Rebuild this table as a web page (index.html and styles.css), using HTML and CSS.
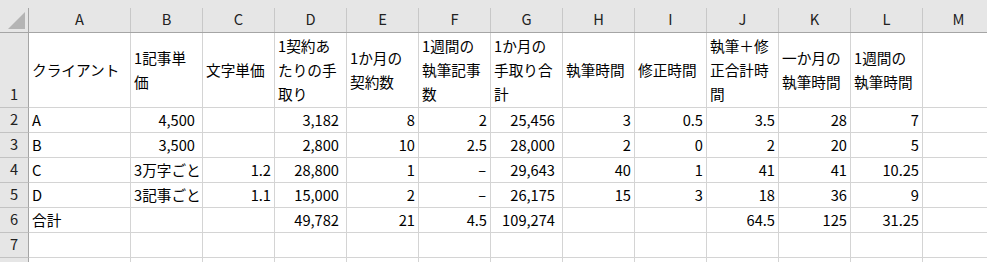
FILE: index.html
```html
<!DOCTYPE html>
<html lang="ja">
<head>
    <meta charset="UTF-8">
    <meta name="viewport" content="width=device-width, initial-scale=1.0">
    <title>執筆単価表</title>
    <link rel="stylesheet" href="styles.css">
</head>
<body>
    <div class="sheet">
        <!-- 列見出し -->
        <div class="corner"><span><i></i></span></div>
        <div class="col-head"><span>A</span></div>
        <div class="col-head"><span>B</span></div>
        <div class="col-head"><span>C</span></div>
        <div class="col-head"><span>D</span></div>
        <div class="col-head"><span>E</span></div>
        <div class="col-head"><span>F</span></div>
        <div class="col-head"><span>G</span></div>
        <div class="col-head"><span>H</span></div>
        <div class="col-head"><span>I</span></div>
        <div class="col-head"><span>J</span></div>
        <div class="col-head"><span>K</span></div>
        <div class="col-head"><span>L</span></div>
        <div class="col-head"><span>M</span></div>

        <!-- 1行目: 項目名 -->
        <div class="row-head">1</div>
        <div class="cell title">クライアント</div>
        <div class="cell title">1記事単価</div>
        <div class="cell title">文字単価</div>
        <div class="cell title">1契約あたりの手取り</div>
        <div class="cell title">1か月の契約数</div>
        <div class="cell title">1週間の執筆記事数</div>
        <div class="cell title">1か月の手取り合計</div>
        <div class="cell title">執筆時間</div>
        <div class="cell title">修正時間</div>
        <div class="cell title">執筆＋修正合計時間</div>
        <div class="cell title">一か月の執筆時間</div>
        <div class="cell title">1週間の執筆時間</div>
        <div class="cell title"></div>

        <div class="row-head">2</div>
        <div class="cell">A</div>
        <div class="cell yen">4,500</div>
        <div class="cell num"></div>
        <div class="cell yen">3,182</div>
        <div class="cell num">8</div>
        <div class="cell num">2</div>
        <div class="cell yen">25,456</div>
        <div class="cell num">3</div>
        <div class="cell num">0.5</div>
        <div class="cell num">3.5</div>
        <div class="cell num">28</div>
        <div class="cell num">7</div>
        <div class="cell"></div>

        <div class="row-head">3</div>
        <div class="cell">B</div>
        <div class="cell yen">3,500</div>
        <div class="cell num"></div>
        <div class="cell yen">2,800</div>
        <div class="cell num">10</div>
        <div class="cell num">2.5</div>
        <div class="cell yen">28,000</div>
        <div class="cell num">2</div>
        <div class="cell num">0</div>
        <div class="cell num">2</div>
        <div class="cell num">20</div>
        <div class="cell num">5</div>
        <div class="cell"></div>

        <div class="row-head">4</div>
        <div class="cell">C</div>
        <div class="cell">3万字ごと</div>
        <div class="cell num">1.2</div>
        <div class="cell yen">28,800</div>
        <div class="cell num">1</div>
        <div class="cell num dash">–</div>
        <div class="cell yen">29,643</div>
        <div class="cell num">40</div>
        <div class="cell num">1</div>
        <div class="cell num">41</div>
        <div class="cell num">41</div>
        <div class="cell num">10.25</div>
        <div class="cell"></div>

        <div class="row-head">5</div>
        <div class="cell">D</div>
        <div class="cell">3記事ごと</div>
        <div class="cell num">1.1</div>
        <div class="cell yen">15,000</div>
        <div class="cell num">2</div>
        <div class="cell num dash">–</div>
        <div class="cell yen">26,175</div>
        <div class="cell num">15</div>
        <div class="cell num">3</div>
        <div class="cell num">18</div>
        <div class="cell num">36</div>
        <div class="cell num">9</div>
        <div class="cell"></div>

        <!-- 合計行 -->
        <div class="row-head">6</div>
        <div class="cell">合計</div>
        <div class="cell"></div>
        <div class="cell"></div>
        <div class="cell yen">49,782</div>
        <div class="cell num">21</div>
        <div class="cell num">4.5</div>
        <div class="cell yen">109,274</div>
        <div class="cell"></div>
        <div class="cell"></div>
        <div class="cell num">64.5</div>
        <div class="cell num">125</div>
        <div class="cell num">31.25</div>
        <div class="cell"></div>

        <div class="row-head">7</div>
        <div class="cell"></div>
        <div class="cell"></div>
        <div class="cell"></div>
        <div class="cell"></div>
        <div class="cell"></div>
        <div class="cell"></div>
        <div class="cell"></div>
        <div class="cell"></div>
        <div class="cell"></div>
        <div class="cell"></div>
        <div class="cell"></div>
        <div class="cell"></div>
        <div class="cell"></div>

        <!-- 下端で切れる次の行 -->
        <div class="row-head"></div>
        <div class="cell"></div>
        <div class="cell"></div>
        <div class="cell"></div>
        <div class="cell"></div>
        <div class="cell"></div>
        <div class="cell"></div>
        <div class="cell"></div>
        <div class="cell"></div>
        <div class="cell"></div>
        <div class="cell"></div>
        <div class="cell"></div>
        <div class="cell"></div>
        <div class="cell"></div>
    </div>
</body>
</html>
```

FILE: styles.css
```css
* {
    margin: 0;
    padding: 0;
    box-sizing: border-box;
}

html,
body {
    overflow: hidden;
}

body {
    font-family: "Noto Sans CJK JP", "Noto Sans", sans-serif;
    font-size: 14.67px;
    color: #000;
    background: #fff;
    width: 987px;
    height: 262px;
}

.sheet {
    display: grid;
    width: max-content;
    grid-template-columns: 29px 102px repeat(12, 72px);
    grid-template-rows: 33px 75px repeat(7, 25px);
}

/* 見出し部分 */
.corner,
.col-head {
    background: #e6e6e6;
    border-bottom: 1px solid #a5a5a5;
    padding-top: 8px;
}

.corner span {
    display: flex;
    justify-content: flex-end;
    align-items: flex-end;
    height: 24px;
    padding: 0 3px 3px 0;
    border-right: 1px solid #a5a5a5;
}

.corner i {
    width: 17px;
    height: 17px;
    background: #b4b4b4;
    clip-path: polygon(100% 0, 100% 100%, 0 100%);
}

.col-head span {
    display: block;
    height: 24px;
    line-height: 22px;
    text-align: center;
    color: #222;
    border-right: 1px solid #c8c8c8;
}

.row-head {
    background: #e6e6e6;
    color: #222;
    border-right: 1px solid #a5a5a5;
    border-bottom: 1px solid #c2c2c2;
    display: flex;
    align-items: flex-end;
    justify-content: center;
    line-height: 24px;
    padding-bottom: 1px;
}

/* セル */
.cell {
    border-right: 1px solid #d4d4d4;
    border-bottom: 1px solid #d4d4d4;
    padding: 0 3px;
    line-height: 24px;
    white-space: nowrap;
    overflow: hidden;
}

.cell.title {
    display: flex;
    align-items: center;
    white-space: normal;
    line-height: 24.3px;
}

.num {
    text-align: right;
}

.yen {
    text-align: right;
    padding-right: 7px;
}

.dash {
    padding-right: 4px;
}
```
